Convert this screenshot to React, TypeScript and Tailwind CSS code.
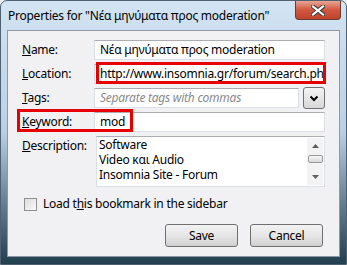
import React from "react";

const font = { fontFamily: '"Noto Sans", "DejaVu Sans", sans-serif' };

const Field = ({ label, children }: { label: React.ReactNode; children: React.ReactNode }) => (
  <div className="flex h-5 items-center">
    <div className="w-[72px] shrink-0 text-[12px] text-black">{label}</div>
    <div className="flex h-5 min-w-0 flex-1">{children}</div>
  </div>
);

const TextBox = ({ value, className = "", italic = false }: { value: string; className?: string; italic?: boolean }) => (
  <div
    className={`flex h-5 min-w-0 flex-1 items-center overflow-hidden whitespace-nowrap border border-[#dbdfe6] border-t-[#abadb3] bg-white pl-[5px] text-[12px] ${
      italic ? "italic text-[#8a8a8a]" : "text-black"
    } ${className}`}
  >
    {value}
  </div>
);

export default function App() {
  return (
    <div style={font} className="relative h-[265px] w-[347px] overflow-hidden bg-[#e9eef3] tracking-[-0.25px]">
      <div className="flex h-full w-full flex-col rounded-t-[7px] border border-[#4f6070] bg-gradient-to-b from-[#d3e4f3] via-[#b9d0e4] to-[#23404f]">
        {/* title bar */}
        <div className="flex h-[29px] shrink-0 items-start justify-between">
          <div className="pl-[7px] pt-[7px] text-[12px] leading-[16px] text-black">
            Properties for "Νέα μηνύματα προς moderation"
          </div>
          <div className="mr-[5px] flex h-[19px] w-[46px] items-center justify-center rounded-b-[4px] border border-t-0 border-[#6b3a30] bg-gradient-to-b from-[#e8a595] via-[#d0563f] to-[#c0442c]">
            <svg width="14" height="11" viewBox="0 0 14 11">
              <path d="M2 1.5 L12 9.5 M12 1.5 L2 9.5" stroke="#3b3b3b" strokeWidth="4.2" strokeLinecap="square" />
              <path d="M2 1.5 L12 9.5 M12 1.5 L2 9.5" stroke="#ffffff" strokeWidth="2.2" strokeLinecap="square" />
            </svg>
          </div>
        </div>

        {/* client area */}
        <div className="mx-[6px] mb-[7px] flex flex-1 flex-col border border-[#8d99a6] bg-[#f1f0f3] pl-[14px] pr-[14px] pt-[9px]">
          <div className="flex flex-col gap-1">
            <Field label={<><u>N</u>ame:</>}>
              <TextBox value="Νέα μηνύματα προς moderation" />
            </Field>
            <Field label={<><u>L</u>ocation:</>}>
              <TextBox value="http://www.insomnia.gr/forum/search.php?do=getnew" />
            </Field>
            <Field label={<><u>T</u>ags:</>}>
              <TextBox value="Separate tags with commas" italic />
              <div className="ml-1 -mt-[1px] flex h-[22px] w-[22px] shrink-0 items-center justify-center rounded-[3px] border border-[#707070] bg-gradient-to-b from-[#f4f4f4] to-[#d8d8d8]">
                <svg width="10" height="7" viewBox="0 0 10 7">
                  <path d="M1.5 1.5 L5 5 L8.5 1.5" stroke="#000" strokeWidth="2" fill="none" />
                </svg>
              </div>
            </Field>
            <Field label={<><u>K</u>eyword:</>}>
              <TextBox value="mod" className="border-[#7eb4ea] border-t-[#5c93bc]" />
            </Field>
            <div className="flex h-[51px]">
              <div className="w-[72px] shrink-0 pt-[1px] text-[12px] text-black">
                <u>D</u>escription:
              </div>
              <div className="ml-[2px] flex min-w-0 flex-1 border border-[#dbdfe6] border-t-[#abadb3] bg-white">
                <div className="flex-1 pl-[2px] text-[12px] leading-[15px] text-black">
                  <div>Software</div>
                  <div>Video και Audio</div>
                  <div>Insomnia Site - Forum</div>
                </div>
                <div className="my-[1px] mr-[1px] flex w-[16px] flex-col items-center bg-[#f3f3f3]">
                  <div className="flex h-[16px] items-center justify-center">
                    <svg width="7" height="4" viewBox="0 0 7 4"><path d="M0 4 L3.5 0 L7 4 Z" fill="#606060" /></svg>
                  </div>
                  <div className="mt-[1px] h-[8px] w-[15px] rounded-[2px] border border-[#9a9a9a] bg-gradient-to-b from-[#f6f6f6] to-[#dadada]" />
                  <div className="flex-1" />
                  <div className="flex h-[16px] items-center justify-center">
                    <svg width="7" height="4" viewBox="0 0 7 4"><path d="M0 0 L3.5 4 L7 0 Z" fill="#606060" /></svg>
                  </div>
                </div>
              </div>
            </div>
          </div>

          <div className="mt-[8px] flex items-center pl-[2px]">
            <div className="h-[13px] w-[13px] border border-[#8f8f8f] bg-gradient-to-br from-[#dcdcdc] to-[#fafafa]" />
            <div className="ml-[6px] text-[12px] text-black">
              Load t<u>h</u>is bookmark in the sidebar
            </div>
          </div>

          <div className="mt-[11px] flex justify-end gap-3 pr-[2px]">
            {["Save", "Cancel"].map((b) => (
              <div
                key={b}
                className="flex h-[23px] w-[73px] items-center justify-center rounded-[3px] border border-[#707070] bg-gradient-to-b from-[#f2f2f2] via-[#e6e6e6] to-[#cfcfcf] text-[12px] text-black"
              >
                {b}
              </div>
            ))}
          </div>
        </div>
      </div>

      {/* red annotation boxes */}
      <div className="absolute left-[96px] top-[62px] h-[22px] w-[230px] border-[3px] border-[#e60000]" />
      <div className="absolute left-[17px] top-[109px] h-[23px] w-[116px] border-[3px] border-[#e60000]" />
    </div>
  );
}
